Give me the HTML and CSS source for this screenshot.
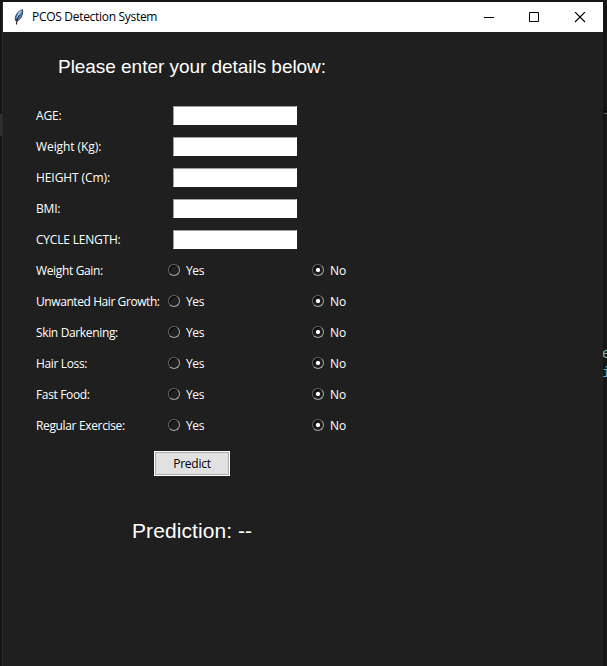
FILE: index.html
```html
<!DOCTYPE html>
<html lang="en">
<head>
<meta charset="utf-8">
<title>PCOS Detection System</title>
<link rel="stylesheet" href="styles.css">
</head>
<body>
<div class="behind behind-left"></div>
<div class="behind behind-line"></div>
<div class="behind behind-code"><span>e</span><span class="keyword">i</span></div>
<main class="window">
  <header class="titlebar">
    <svg class="feather" width="10" height="17" viewBox="0 0 10 17">
      <path d="M1.500 11.500C.5 7.500 3 2.500 8.500 .8C9.300 4.500 7.500 9.500 3.500 12Z" fill="#4d80bd" stroke="#26303d" stroke-width=".9"/>
      <path d="M3 9.500L5.500 3.500L7.500 2" fill="none" stroke="#b5d5f2" stroke-width="1.500"/>
      <path d="M2.500 15.500L3 10L5.500 6" fill="none" stroke="#111"/>
    </svg>
    <h1 class="title">PCOS Detection System</h1>
    <svg class="controls" width="102" height="11" viewBox="0 0 102 11" fill="none" stroke="#000">
      <path d="M0 5.500H10M45.500 .5H54.500V9.500H45.500Z"/>
      <path d="M91 0L101 10M101 0L91 10" stroke-width="1.100"/>
    </svg>
  </header>
  <h2 class="heading">Please enter your details below:</h2>
  <form class="form">
    <div class="row"><label class="label caps" for="age">AGE:</label><input class="entry" id="age"></div>
    <div class="row"><label class="label loose" for="weight">Weight (Kg):</label><input class="entry" id="weight"></div>
    <div class="row"><label class="label loose" for="height">HEIGHT (Cm):</label><input class="entry" id="height"></div>
    <div class="row"><label class="label caps" for="bmi">BMI:</label><input class="entry" id="bmi"></div>
    <div class="row"><label class="label caps" for="cycle">CYCLE LENGTH:</label><input class="entry" id="cycle"></div>
    <div class="row"><span class="label">Weight Gain:</span><label class="choice yes"><input type="radio" name="gain">Yes</label><label class="choice"><input type="radio" name="gain" checked>No</label></div>
    <div class="row"><span class="label tight">Unwanted Hair Growth:</span><label class="choice yes"><input type="radio" name="growth">Yes</label><label class="choice"><input type="radio" name="growth" checked>No</label></div>
    <div class="row"><span class="label">Skin Darkening:</span><label class="choice yes"><input type="radio" name="skin">Yes</label><label class="choice"><input type="radio" name="skin" checked>No</label></div>
    <div class="row"><span class="label">Hair Loss:</span><label class="choice yes"><input type="radio" name="loss">Yes</label><label class="choice"><input type="radio" name="loss" checked>No</label></div>
    <div class="row"><span class="label">Fast Food:</span><label class="choice yes"><input type="radio" name="food">Yes</label><label class="choice"><input type="radio" name="food" checked>No</label></div>
    <div class="row"><span class="label">Regular Exercise:</span><label class="choice yes"><input type="radio" name="exercise">Yes</label><label class="choice"><input type="radio" name="exercise" checked>No</label></div>
    <button class="predict" type="button">Predict</button>
  </form>
  <p class="result">Prediction: --</p>
</main>
</body>
</html>
```
FILE: styles.css
```css
* { box-sizing: border-box; }
body {
  margin: 0;
  height: 666px;
  padding: 2px 4px 0 3px;
  overflow: hidden;
  position: relative;
  background: #151515;
  font: 12px/16px "Open Sans", "Noto Sans", sans-serif;
  color: #fff;
}
.behind { position: absolute; }
.behind-left { left: 0; top: 114px; width: 2px; height: 22px; background: #303033; }
.behind-line { right: 0; top: 111px; width: 3px; height: 3px; border-top: 1px solid #000; border-bottom: 1px solid #704b78; }
.behind-code {
  left: 602px;
  top: 345px;
  display: flex;
  flex-direction: column;
  font: 14px/19px "Liberation Mono", monospace;
  color: #75b5b5;
}
.keyword { color: #4fa8e0; }
.window {
  position: relative;
  height: 664px;
  display: flex;
  flex-direction: column;
  align-items: flex-start;
  background: #1f1f1f;
  box-shadow: -1px 0 #292929;
  clip-path: inset(0 0 0 -1px);
}
.titlebar {
  display: flex;
  align-items: center;
  width: 100%;
  height: 30px;
  padding: 0 17px 0 11px;
  background: #fff;
  color: #000;
}
.title {
  margin: 0 auto 0 8px;
  font-size: 12px;
  font-weight: 400;
  letter-spacing: -0.3px;
}
.heading {
  margin: 23px 0 0 55px;
  font: 400 19px/24px "Liberation Sans", sans-serif;
  letter-spacing: -0.04px;
}
.form {
  display: flex;
  flex-direction: column;
  margin: 21px 0 0 33px;
}
.row {
  display: grid;
  grid-template-columns: 132px 144px 70px;
  align-items: center;
  height: 31px;
}
.label { white-space: nowrap; letter-spacing: -0.35px; }
.caps { letter-spacing: -0.2px; }
.loose { letter-spacing: -0.08px; }
.tight { letter-spacing: -0.42px; }
.entry {
  width: 124px;
  height: 19px;
  margin: 0 0 0 5px;
  padding: 1px;
  border: 1px solid #fff;
  border-top-color: #a0a0a0;
  border-left-color: #a0a0a0;
  border-radius: 0;
  background: #fff;
  outline: 0;
}
.choice { display: flex; align-items: center; gap: 6px; }
.yes { letter-spacing: -0.35px; }
.choice input {
  appearance: none;
  width: 12px;
  height: 12px;
  margin: 0 0 1px;
  border: 1px solid;
  border-color: #666 #a5a5a5 #a5a5a5 #666;
  border-radius: 50%;
  box-shadow: inset 1px 1px #000;
}
.choice input:checked { background: radial-gradient(circle, #fff 1.900px, transparent 2.300px); }
.predict {
  width: 76px;
  height: 25px;
  margin: 10px 0 0 118px;
  padding: 1px 0 0;
  border: 1px solid #fff;
  border-radius: 0;
  box-shadow: inset 0 0 0 1px #adadad;
  background: #e1e1e1;
  font: inherit;
  letter-spacing: -0.25px;
  color: #000;
}
.result {
  margin: 43px 0 0 129px;
  font: 21px/24px "Liberation Sans", sans-serif;
  letter-spacing: 0.08px;
}
```
